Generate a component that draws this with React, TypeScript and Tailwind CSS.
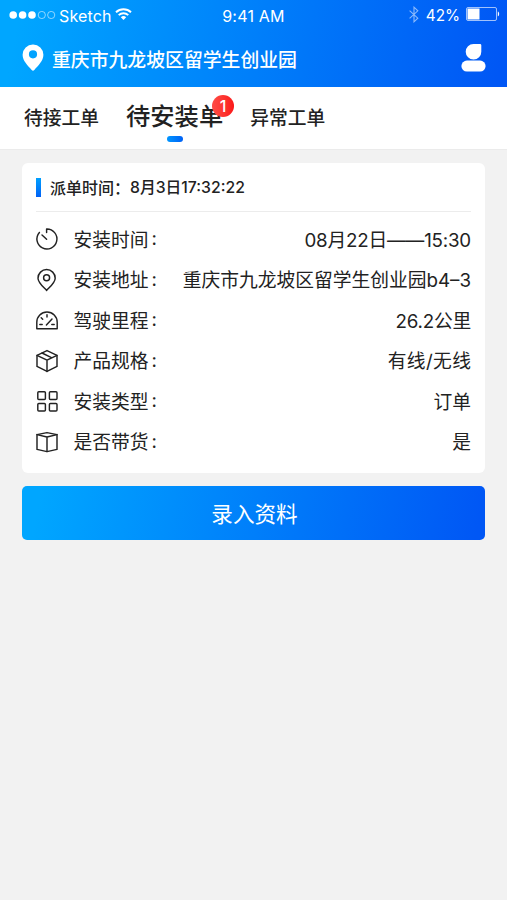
import type { ReactNode } from 'react';

interface DetailRow {
  label: string;
  value: string;
  icon: ReactNode;
  valueClass?: string;
}

const rows: DetailRow[] = [
  { label: '安装时间', value: '08月22日——15:30', icon: <TimerIcon />, valueClass: 'tracking-[-0.2px]' },
  { label: '安装地址', value: '重庆市九龙坡区留学生创业园b4–3', icon: <PinIcon /> },
  { label: '驾驶里程', value: '26.2公里', icon: <GaugeIcon />, valueClass: 'tracking-[-0.2px]' },
  { label: '产品规格', value: '有线/无线', icon: <PackageIcon />, valueClass: 'tracking-[0.4px] -mr-[0.4px]' },
  { label: '安装类型', value: '订单', icon: <GridIcon /> },
  { label: '是否带货', value: '是', icon: <BoxIcon /> },
];

function LineIcon({ children }: { children: ReactNode }) {
  return (
    <svg
      className="w-6 h-6 shrink-0"
      viewBox="0 0 24 24"
      fill="none"
      stroke="currentColor"
      strokeWidth={1.45}
      strokeLinecap="round"
      strokeLinejoin="round"
    >
      {children}
    </svg>
  );
}

function TimerIcon() {
  return (
    <LineIcon>
      <path d="M11.6 5.4V2A10 10 0 1 1 4.4 5.4" />
      <path d="M7 8l4.6 4.2" />
    </LineIcon>
  );
}

function PinIcon() {
  return (
    <LineIcon>
      <path d="M11.6 22.4C9 19.6 3 14.8 3 10.2a8.6 8.6 0 0 1 17.2 0C20.2 14.8 14.2 19.6 11.6 22.4Z" />
      <circle cx="11.6" cy="9.8" r="3" />
    </LineIcon>
  );
}

function GaugeIcon() {
  return (
    <LineIcon>
      <path d="M1.8 20.8V14.2a10.2 10.2 0 0 1 20.4 0v6.6Z" />
      <path d="M11.4 17l5.6-6M4.8 16.4h2.4M16.8 16.4h2.4M6.2 9.8l1.5 1.5M12 6.8V9" />
    </LineIcon>
  );
}

function PackageIcon() {
  return (
    <LineIcon>
      <path d="M12 1.6l10 4.8v11L12 22.4 2 17.4v-11Z" />
      <path d="M2 6.4l10 4.8 10-4.8M12 11.2v11.2M7 4l10 4.8" />
    </LineIcon>
  );
}

function GridIcon() {
  return (
    <LineIcon>
      <rect x="2.8" y="2.8" width="7.6" height="7.6" rx="1" />
      <rect x="14.4" y="2.8" width="7.6" height="7.6" rx="1" />
      <rect x="2.8" y="14.4" width="7.6" height="7.6" rx="1" />
      <rect x="14.4" y="14.4" width="7.6" height="7.6" rx="1" />
    </LineIcon>
  );
}

function BoxIcon() {
  return (
    <LineIcon>
      <path d="M2 4.6L12 2.6l10 2v14.8l-10 2.2-10-2.2Z" />
      <path d="M2 4.6L12 7l10-2.4M12 7v14.6" />
    </LineIcon>
  );
}

function StatusBar() {
  return (
    <div className="grid grid-cols-3 items-center h-[31px] pl-[9px] pr-[7px] text-base leading-none">
      <div className="flex items-center">
        <svg className="w-[47px] h-2.5 -mt-0.5" viewBox="0 0 47 10" fill="#fff">
          <circle cx="4.2" cy="5" r="3.8" />
          <circle cx="13.6" cy="5" r="3.8" />
          <circle cx="23" cy="5" r="3.8" />
          <g fill="none" stroke="#fff" strokeWidth="0.7" opacity="0.8">
            <circle cx="32.8" cy="5" r="3.6" />
            <circle cx="42.2" cy="5" r="3.6" />
          </g>
        </svg>
        <span className="ml-[3px] tracking-[0.15px]">Sketch</span>
        <svg className="w-[17px] h-3 ml-[3px] -mt-[3px]" viewBox="0 0 17 12" fill="none" stroke="#fff" strokeWidth="1.9">
          <path d="M1 4.3a10.8 10.8 0 0 1 15 0" />
          <path d="M3.7 7.1a7 7 0 0 1 9.6 0" />
          <path d="M8.5 12L5.8 9.2a4 4 0 0 1 5.4 0Z" fill="#fff" stroke="none" />
        </svg>
      </div>
      <div className="-ml-0.5 text-center tracking-[0.2px]">9:41 AM</div>
      <div className="flex items-center justify-end">
        <svg className="w-2.5 h-[17px] mr-[7px] -mt-0.5 opacity-55" viewBox="0 0 10 17" fill="none" stroke="#fff" strokeWidth="1.1">
          <path d="M0.6 4.6l8.2 7.6L5 15.8V1.2l3.8 3.6L0.6 12.4" />
        </svg>
        <span className="mt-px text-[15.3px]">42%</span>
        <svg className="w-[34px] h-4 ml-1.5 -mt-[3px]" viewBox="0 0 34 16">
          <rect x="0.5" y="1.5" width="30" height="13" rx="1.5" fill="none" stroke="#fff" strokeOpacity="0.7" strokeWidth="0.9" />
          <rect x="1.5" y="2.5" width="12" height="11" fill="#fff" />
          <path d="M31.8 5.6c1.8.6 1.8 4.2 0 4.8Z" fill="#fff" />
        </svg>
      </div>
    </div>
  );
}

function Header() {
  return (
    <header className="h-[87px] text-white bg-[linear-gradient(100deg,#00a6ff_4%,#0057f5_98%)]">
      <StatusBar />
      <div className="flex items-center h-[52px] pl-[22px] pr-[21px]">
        <svg className="w-[22px] h-[27px]" viewBox="0 0 22 27" fill="#fff">
          <path
            fillRule="evenodd"
            d="M11 .5A10.3 10.3 0 0 0 .6 10.7C.6 17 6 21.6 9.7 25.9a1.7 1.7 0 0 0 2.6 0C16 21.6 21.4 17 21.4 10.7A10.3 10.3 0 0 0 11 .5Zm0 5.7a4.1 4.1 0 1 1 0 8.2 4.1 4.1 0 0 1 0-8.2Z"
          />
        </svg>
        <h1 className="mt-2 ml-2 text-[18.85px] leading-none font-medium">重庆市九龙坡区留学生创业园</h1>
        <svg className="w-[25px] h-7 ml-auto mt-0.5" viewBox="0 0 25 28" fill="#fff">
          <path d="M12.5 0H19a1.3 1.3 0 0 1 1.3 1.3v6.4A7.8 7.8 0 1 1 12.5 0Z" />
          <rect x="0.4" y="16.6" width="24.2" height="11" rx="5.5" />
        </svg>
      </div>
    </header>
  );
}

function Tabs() {
  return (
    <nav className="flex items-start h-[63px] pl-6 bg-white border-b border-[#ebebeb] font-medium leading-none text-[#222]">
      <button type="button" className="mt-[23px] text-[18.75px]">待接工单</button>
      <button type="button" className="relative mt-[17px] ml-[27px] text-[24.3px]">
        待安装单
        <span className="absolute -top-[9px] -right-[11px] flex items-center justify-center w-[22px] h-[22px] rounded-full bg-linear-to-r from-[#ff4b45] to-[#fb1518] text-base leading-none text-white">
          1
        </span>
        <span className="absolute top-8 left-1/2 -translate-x-1/2 w-4 h-1.5 rounded-full bg-linear-to-r from-[#0096ff] to-[#0060f5]" />
      </button>
      <button type="button" className="mt-[23px] ml-[27px] text-[18.75px]">异常工单</button>
    </nav>
  );
}

export default function App() {
  return (
    <div className="min-h-screen bg-[#f2f2f2] font-['Inter','Noto_Sans_CJK_SC',sans-serif]">
      <Header />
      <Tabs />
      <main className="pt-[13px] px-[22px]">
        <section className="h-[310px] px-3.5 rounded-md bg-white text-[#222]">
          <div className="flex items-center h-[49px] border-b border-[#ececec] text-[16px] font-medium">
            <span className="w-[5px] h-[19px] mr-[9px] bg-linear-to-b from-[#00a0ff] to-[#0060f5]" />
            <span className="mt-0.5">派单时间：</span>
            <span className="mt-0.5 text-[15.75px]">8月3日17:32:22</span>
          </div>
          <ul className="pt-[7px]">
            {rows.map((row) => (
              <li key={row.label} className="flex items-center h-[40.5px] text-[18.75px] leading-none">
                <span className="-ml-[1.5px]">{row.icon}</span>
                <span className="mt-1 ml-[15px]">{row.label}</span>
                <span className="mt-px ml-[3px]">:</span>
                <span className={`mt-1 ml-auto ${row.valueClass ?? ''}`}>{row.value}</span>
              </li>
            ))}
          </ul>
        </section>
        <button
          type="button"
          className="flex items-center justify-center w-full h-[54px] mt-[13px] pt-0.5 pl-0.5 rounded-[5px] bg-[linear-gradient(100deg,#00a6ff_4%,#0057f5_98%)] text-[21.6px] text-white"
        >
          录入资料
        </button>
      </main>
    </div>
  );
}
